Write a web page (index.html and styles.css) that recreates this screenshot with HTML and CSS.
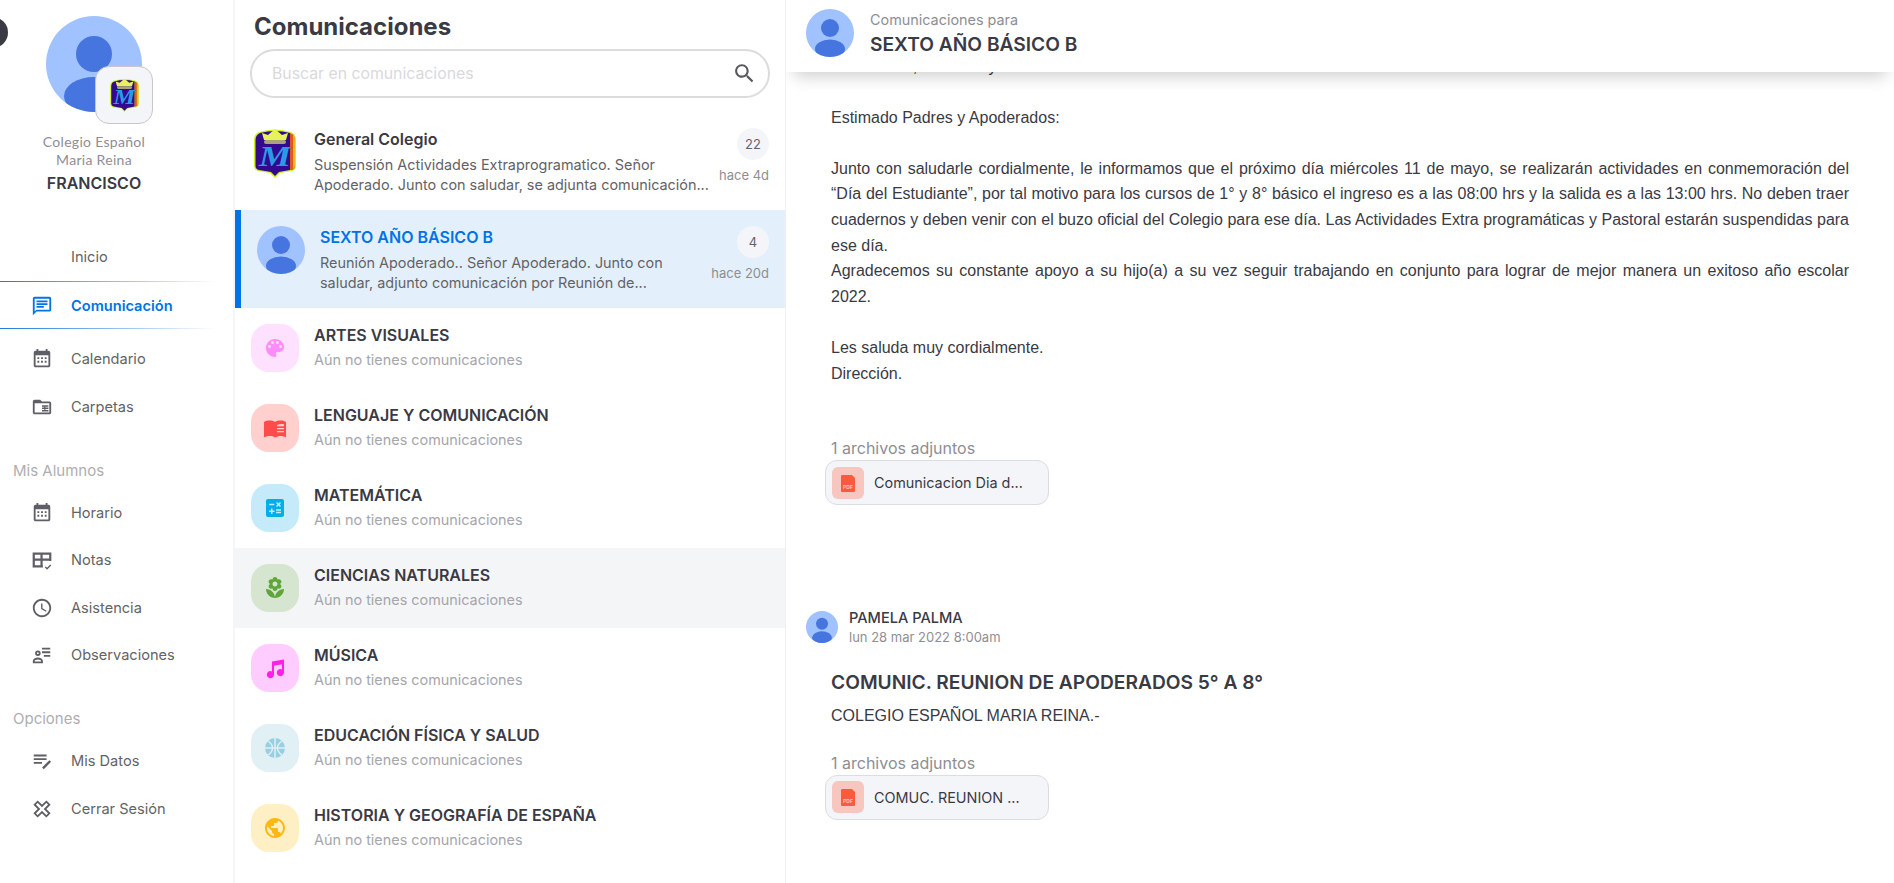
FILE: index.html
```html
<!DOCTYPE html>
<html lang="es">
<head>
<meta charset="utf-8">
<title>Comunicaciones</title>
<link rel="stylesheet" href="styles.css">
</head>
<body>
<svg class="defs" aria-hidden="true">
  <defs>
    <clipPath id="avatar-clip"><circle cx="48" cy="48" r="48"/></clipPath>
    <symbol id="avatar" viewBox="0 0 96 96">
      <circle cx="48" cy="48" r="48" fill="#a0c2ff"/>
      <g clip-path="url(#avatar-clip)" fill="#4675e0">
        <circle cx="48" cy="38" r="18"/>
        <ellipse cx="48" cy="80" rx="30" ry="19"/>
      </g>
    </symbol>
    <symbol id="shield" viewBox="0 0 42 50">
      <path d="M5 4 Q21 -1 37 4 Q42 6 42 12 L42 38 Q42 42 38 43 L26 45 L21 50 L16 45 L4 43 Q0 42 0 38 L0 12 Q0 6 5 4Z" fill="#c9f51f"/>
      <path d="M6 5 Q21 1 36 5 L36 42 L25 44 L21 48 L17 44 L5 42 Q1.500 41 1.500 38 L1.500 12 Q1.500 7 6 5Z" fill="#33098f"/>
      <path d="M36 5 Q41 7 41 12 L41 38 Q41 41 38 42 L36 42Z" fill="#dc5a1e"/>
      <path d="M39 7 Q41 9 41 12 L41 38 Q41 40 39 41Z" fill="#f0b41e"/>
      <path d="M10 12 L8 5 L14 7 L21 1 L28 7 L34 5 L32 12Z" fill="#e8f25a"/>
      <rect x="10" y="12" width="22" height="4" rx="2" fill="#a9a27a"/>
      <text x="21" y="38" text-anchor="middle" textLength="32" lengthAdjust="spacingAndGlyphs" class="shield-letter">M</text>
    </symbol>
    <symbol id="pdf" viewBox="0 0 32 32">
      <path d="M10 8 H20 L23 11 V24 Q23 25 22 25 H10 Q9 25 9 24 V9 Q9 8 10 8Z" fill="#fb5a3c"/>
      <text x="16" y="22" text-anchor="middle" class="pdf-text">PDF</text>
    </symbol>
    <symbol id="i-calendar" viewBox="0 0 24 24">
      <path d="M19 3h-1V1h-2v2H8V1H6v2H5c-1.11 0-1.99.9-1.99 2L3 19c0 1.1.89 2 2 2h14c1.1 0 2-.9 2-2V5c0-1.1-.9-2-2-2zm0 16H5V8h14v11z"/>
      <path d="M7 10h2v2H7zm4 0h2v2h-2zm4 0h2v2h-2zM7 14h2v2H7zm4 0h2v2h-2zm4 0h2v2h-2z"/>
    </symbol>
  </defs>
</svg>

<div class="app">
  <aside class="sidebar">
    <span class="corner-dot"></span>
    <div class="profile">
      <div class="profile-pic">
        <svg class="profile-avatar"><use href="#avatar"/></svg>
        <div class="school-badge"><svg class="school-shield"><use href="#shield"/></svg></div>
      </div>
      <p class="school-name">Colegio Español<br>Maria Reina</p>
      <p class="student-name">FRANCISCO</p>
    </div>
    <nav class="nav">
      <div class="nav-item"><span class="nav-icon"></span>Inicio</div>
      <div class="nav-item active">
        <svg class="nav-icon" viewBox="0 0 24 24"><path d="M20 2H4c-1.1 0-2 .9-2 2v18l4-4h14c1.1 0 2-.9 2-2V4c0-1.1-.9-2-2-2zm0 14H6l-2 2V4h16v12z"/><path d="M6 12h8v2H6zm0-3h12v2H6zm0-3h12v2H6z"/></svg>
        Comunicación
      </div>
      <div class="nav-group">
        <div class="nav-item"><svg class="nav-icon"><use href="#i-calendar"/></svg>Calendario</div>
        <div class="nav-item"><svg class="nav-icon" viewBox="0 0 24 24"><path d="M20 6h-8l-2-2H4c-1.1 0-2 .9-2 2v12c0 1.1.9 2 2 2h16c1.1 0 2-.9 2-2V8c0-1.1-.9-2-2-2zm0 12H4V8h16v10z"/><path d="M12 10h7v1.600h-7zm0 2.600h7v1.600h-7zm0 2.600h7v1.600h-7zM14.500 10h1.200v7h-1.200z"/></svg>Carpetas</div>
      </div>
      <div class="nav-label">Mis Alumnos</div>
      <div class="nav-item"><svg class="nav-icon"><use href="#i-calendar"/></svg>Horario</div>
      <div class="nav-item"><svg class="nav-icon stroked heavy" viewBox="0 0 24 24"><path d="M13 19H3V5h18v8M3 11.500h18M11.500 5v14"/><path class="thin" d="M15.500 19.500l2 2 4-4"/></svg>Notas</div>
      <div class="nav-item"><svg class="nav-icon" viewBox="0 0 24 24"><path d="M11.99 2C6.47 2 2 6.48 2 12s4.47 10 9.99 10C17.52 22 22 17.52 22 12S17.52 2 11.99 2zM12 20c-4.42 0-8-3.58-8-8s3.58-8 8-8 8 3.58 8 8-3.58 8-8 8zm.5-13H11v6l5.25 3.15.75-1.23-4.5-2.67z"/></svg>Asistencia</div>
      <div class="nav-item"><svg class="nav-icon stroked" viewBox="0 0 24 24"><circle cx="7.500" cy="10" r="2"/><path d="M3 20v-1.500c0-1.800 2.600-2.700 4.500-2.700s4.500.9 4.500 2.700V20z"/><path d="M12 5h9M12 9h9M14 13h7"/></svg>Observaciones</div>
      <div class="nav-label">Opciones</div>
      <div class="nav-item"><svg class="nav-icon stroked" viewBox="0 0 24 24"><path d="M3 6h14M3 10h14M3 14h9"/><path class="thick" d="M13 20l8-8"/></svg>Mis Datos</div>
      <div class="nav-item"><svg class="nav-icon stroked" viewBox="0 0 24 24"><path transform="rotate(45 12 12)" d="M9.700 3h4.600v6.700H21v4.600h-6.700V21H9.700v-6.700H3V9.700h6.700z"/></svg>Cerrar Sesión</div>
    </nav>
  </aside>

  <section class="channels">
    <h1 class="channels-title">Comunicaciones</h1>
    <div class="search">
      <span class="search-placeholder">Buscar en comunicaciones</span>
      <svg class="search-icon" viewBox="0 0 24 24"><path d="M15.5 14h-.79l-.28-.27C15.41 12.59 16 11.11 16 9.5 16 5.91 13.09 3 9.5 3S3 5.91 3 9.5 5.91 16 9.5 16c1.61 0 3.09-.59 4.23-1.57l.27.28v.79l5 4.99L20.49 19l-4.99-5zm-6 0C7.01 14 5 11.99 5 9.5S7.01 5 9.5 5 14 7.01 14 9.5 11.99 14 9.5 14z"/></svg>
    </div>
    <div class="channel-list">
      <div class="channel channel-tall">
        <svg class="channel-logo"><use href="#shield"/></svg>
        <div class="channel-text">
          <div class="channel-name">General Colegio</div>
          <div class="channel-desc">Suspensión Actividades Extraprogramatico. Señor Apoderado. Junto con saludar, se adjunta comunicación...</div>
        </div>
        <div class="channel-meta"><span class="count">22</span><span class="when">hace 4d</span></div>
      </div>
      <div class="channel channel-tall selected">
        <svg class="channel-avatar"><use href="#avatar"/></svg>
        <div class="channel-text">
          <div class="channel-name">SEXTO AÑO BÁSICO B</div>
          <div class="channel-desc">Reunión Apoderado.. Señor Apoderado. Junto con saludar, adjunto comunicación por Reunión de...</div>
        </div>
        <div class="channel-meta"><span class="count">4</span><span class="when">hace 20d</span></div>
      </div>

      <div class="channel">
        <span class="subject-icon tone-pink"><svg viewBox="0 0 24 24"><path d="M12 3c-4.97 0-9 4.03-9 9s4.03 9 9 9c.83 0 1.5-.67 1.5-1.5 0-.39-.15-.74-.39-1.01-.23-.26-.38-.61-.38-.99 0-.83.67-1.5 1.5-1.5H16c2.76 0 5-2.24 5-5 0-4.42-4.03-8-9-8zm-5.5 9c-.83 0-1.5-.67-1.5-1.5S5.67 9 6.5 9 8 9.67 8 10.5 7.33 12 6.5 12zm3-4C8.67 8 8 7.33 8 6.5S8.67 5 9.5 5s1.5.67 1.5 1.5S10.33 8 9.5 8zm5 0c-.83 0-1.5-.67-1.5-1.5S13.67 5 14.5 5s1.5.67 1.5 1.5S15.33 8 14.5 8zm3 4c-.83 0-1.5-.67-1.5-1.5S16.67 9 17.5 9s1.5.67 1.5 1.5-.67 1.5-1.5 1.5z"/></svg></span>
        <div class="channel-text"><div class="channel-name">ARTES VISUALES</div><div class="channel-empty">Aún no tienes comunicaciones</div></div>
      </div>
      <div class="channel">
        <span class="subject-icon tone-red"><svg viewBox="0 0 24 24"><path d="M1 6c1.45-1.1 3.55-1.5 5.5-1.5s4.05.4 5.5 1.5v15.5c-1.45-1.1-3.55-1.5-5.5-1.5-1.45 0-3.4.45-4.75 1.1-.1 0-.15.05-.25.05-.25 0-.5-.25-.5-.5z"/><path d="M12 6c1.45-1.1 3.55-1.5 5.5-1.5 1.17 0 2.39.15 3.5.5.75.25 1.4.55 2 1v14.65c0 .25-.25.5-.5.5-.1 0-.15 0-.25-.05-1.4-.75-3.1-1.05-4.75-1.05-1.7 0-4.15.65-5.5 1.5zm2 3v1.3h7V8.2c-2.4-.6-5-.3-7 .8zm0 3v1.3h7V12zm0 3v1.3h7V15z"/></svg></span>
        <div class="channel-text"><div class="channel-name">LENGUAJE Y COMUNICACIÓN</div><div class="channel-empty">Aún no tienes comunicaciones</div></div>
      </div>
      <div class="channel">
        <span class="subject-icon tone-sky"><svg viewBox="0 0 24 24"><path d="M19 3H5c-1.1 0-2 .9-2 2v14c0 1.1.9 2 2 2h14c1.1 0 2-.9 2-2V5c0-1.1-.9-2-2-2zm-5.97 4.06L14.09 6l1.41 1.41L16.91 6l1.06 1.06-1.41 1.41 1.41 1.41-1.06 1.06-1.41-1.4-1.41 1.41-1.06-1.06 1.41-1.41-1.41-1.42zm-6.78.66h5v1.5h-5v-1.5zM11.5 16h-2v2H8v-2H6v-1.5h2v-2h1.5v2h2V16zm6.5 1.25h-5v-1.5h5v1.5zm0-2.5h-5v-1.5h5v1.5z"/></svg></span>
        <div class="channel-text"><div class="channel-name">MATEMÁTICA</div><div class="channel-empty">Aún no tienes comunicaciones</div></div>
      </div>
      <div class="channel hovered">
        <span class="subject-icon tone-green"><svg viewBox="0 0 24 24"><path d="M12 22c4.97 0 9-4.03 9-9-4.97 0-9 4.03-9 9zM5.6 10.25c0 1.38 1.12 2.5 2.5 2.5.53 0 1.01-.16 1.42-.44l-.02.19c0 1.38 1.12 2.5 2.5 2.5s2.5-1.12 2.5-2.5l-.02-.19c.4.28.89.44 1.42.44 1.38 0 2.5-1.12 2.5-2.5 0-1-.59-1.85-1.43-2.25.84-.4 1.43-1.25 1.43-2.25 0-1.38-1.12-2.5-2.5-2.5-.53 0-1.01.16-1.42.44l.02-.19C14.5 2.12 13.38 1 12 1S9.5 2.12 9.5 3.5l.02.19c-.4-.28-.89-.44-1.42-.44-1.38 0-2.5 1.12-2.5 2.5 0 1 .59 1.85 1.43 2.25-.84.4-1.43 1.25-1.43 2.25zM12 5.5c1.38 0 2.5 1.12 2.5 2.5s-1.12 2.5-2.5 2.5S9.5 9.38 9.5 8s1.12-2.5 2.5-2.5zM3 13c0 4.97 4.03 9 9 9 0-4.97-4.03-9-9-9z"/></svg></span>
        <div class="channel-text"><div class="channel-name">CIENCIAS NATURALES</div><div class="channel-empty">Aún no tienes comunicaciones</div></div>
      </div>
      <div class="channel">
        <span class="subject-icon tone-magenta"><svg viewBox="0 0 24 24"><path d="M21 3.500 9 5.500V15.400a3.600 3.600 0 1 0 2 3.200V9.700l8-1.400v5.100a3.600 3.600 0 1 0 2 3.200z"/></svg></span>
        <div class="channel-text"><div class="channel-name">MÚSICA</div><div class="channel-empty">Aún no tienes comunicaciones</div></div>
      </div>
      <div class="channel">
        <span class="subject-icon tone-ice"><svg viewBox="0 0 24 24"><circle cx="12" cy="12" r="10"/><path class="ball-seams" d="M12 2v20M2 12h20M5 5c3 2 4.500 4.500 4.500 7S8 17 5 19M19 5c-3 2-4.500 4.500-4.500 7s1.500 5 4.500 7"/></svg></span>
        <div class="channel-text"><div class="channel-name">EDUCACIÓN FÍSICA Y SALUD</div><div class="channel-empty">Aún no tienes comunicaciones</div></div>
      </div>
      <div class="channel">
        <span class="subject-icon tone-amber"><svg viewBox="0 0 24 24"><path d="M12 2C6.48 2 2 6.48 2 12s4.48 10 10 10 10-4.48 10-10S17.52 2 12 2zm-1 17.93c-3.95-.49-7-3.85-7-7.93 0-.62.08-1.21.21-1.79L9 15v1c0 1.1.9 2 2 2v1.93zm6.9-2.54c-.26-.81-1-1.39-1.9-1.39h-1v-3c0-.55-.45-1-1-1H8v-2h2c.55 0 1-.45 1-1V7h2c1.1 0 2-.9 2-2v-.41c2.93 1.19 5 4.06 5 7.41 0 2.08-.8 3.97-2.1 5.39z"/></svg></span>
        <div class="channel-text"><div class="channel-name">HISTORIA Y GEOGRAFÍA DE ESPAÑA</div><div class="channel-empty">Aún no tienes comunicaciones</div></div>
      </div>
    </div>
  </section>

  <main class="feed">
    <header class="feed-header">
      <svg class="feed-avatar"><use href="#avatar"/></svg>
      <div class="feed-heading">
        <div class="feed-overline">Comunicaciones para</div>
        <div class="feed-title">SEXTO AÑO BÁSICO B</div>
      </div>
    </header>
    <div class="feed-scroll">
      <article class="message">
        <div class="message-body">
          <p class="prose">Talcahuano, 06 de mayo</p>
          <p class="prose prose-gap">Estimado Padres y Apoderados:</p>
          <p class="prose prose-gap">Junto con saludarle cordialmente, le informamos que el próximo día miércoles 11 de mayo, se realizarán actividades en conmemoración del “Día del Estudiante”, por tal motivo para los cursos de 1° y 8° básico el ingreso es a las 08:00 hrs y la salida es a las 13:00 hrs. No deben traer cuadernos y deben venir con el buzo oficial del Colegio para ese día. Las Actividades Extra programáticas y Pastoral estarán suspendidas para ese día.</p>
          <p class="prose">Agradecemos su constante apoyo a su hijo(a) a su vez seguir trabajando en conjunto para lograr de mejor manera un exitoso año escolar 2022.</p>
          <p class="prose prose-gap">Les saluda muy cordialmente.</p>
          <p class="prose">Dirección.</p>
          <div class="attach-label attach-label-first">1 archivos adjuntos</div>
          <div class="chip"><svg class="chip-icon"><use href="#pdf"/></svg><span class="chip-name">Comunicacion Dia d...</span></div>
        </div>
      </article>
      <article class="message message-second">
        <div class="sender">
          <svg class="sender-avatar"><use href="#avatar"/></svg>
          <div>
            <div class="sender-name">PAMELA PALMA</div>
            <div class="sender-date">lun 28 mar 2022 8:00am</div>
          </div>
        </div>
        <div class="message-body">
          <h2 class="message-title">COMUNIC. REUNION DE APODERADOS 5° A 8°</h2>
          <p class="prose prose-tight">COLEGIO ESPAÑOL MARIA REINA.-</p>
          <div class="attach-label">1 archivos adjuntos</div>
          <div class="chip"><svg class="chip-icon"><use href="#pdf"/></svg><span class="chip-name">COMUC. REUNION ...</span></div>
        </div>
      </article>
    </div>
  </main>
</div>
</body>
</html>
```

FILE: styles.css
```css
* { box-sizing: border-box; }

html, body {
  margin: 0;
  height: 100%;
  overflow: hidden;
  background: #fff;
}

body {
  font-family: "Inter", "Liberation Sans", sans-serif;
  color: #3a3a44;
}

p, h1, h2 { margin: 0; }

.defs { width: 0; height: 0; display: block; }

.shield-letter {
  font-family: "Liberation Serif", serif;
  font-style: italic;
  font-weight: 700;
  font-size: 30px;
  fill: #2a9ae8;
}

.pdf-text {
  font-family: "Inter", sans-serif;
  font-weight: 700;
  font-size: 5px;
  fill: #ffc9bd;
}

.app {
  display: flex;
  height: 883px;
}

/* Sidebar */
.sidebar {
  position: relative;
  flex: none;
  width: 235px;
  border-right: 2px solid #f4f5f9;
  overflow: hidden;
}

.corner-dot {
  position: absolute;
  left: -23px;
  top: 17px;
  width: 31px;
  height: 31px;
  border-radius: 50%;
  background: #3a3a44;
}

.profile {
  width: 188px;
  padding-top: 16px;
  height: 233px;
  text-align: center;
}

.profile-pic {
  position: relative;
  width: 96px;
  height: 96px;
  margin: 0 auto;
}

.profile-avatar { width: 96px; height: 96px; display: block; }

.school-badge {
  position: absolute;
  left: 49px;
  top: 50px;
  width: 58px;
  height: 58px;
  border: 1.5px solid #c6c6cc;
  border-radius: 14px;
  background: #f4f5f9;
  display: flex;
  align-items: center;
  justify-content: center;
}

.school-shield { width: 29px; height: 34px; }

.school-name {
  margin-top: 21px;
  font-family: "Lato", "Open Sans", sans-serif;
  font-size: 14px;
  line-height: 18px;
  color: #8e8e93;
  letter-spacing: .3px;
}

.student-name {
  margin-top: 3px;
  font-size: 16px;
  font-weight: 600;
  line-height: 22px;
  color: #3a3a44;
}

.nav { display: block; }

.nav-item {
  display: flex;
  align-items: center;
  height: 47.6px;
  padding-left: 31px;
  font-size: 14.6px;
  color: #636366;
}

.nav-icon {
  flex: none;
  width: 22px;
  height: 22px;
  margin-right: 18px;
  fill: #5e5e66;
}

.nav-icon.stroked {
  fill: none;
  stroke: #5e5e66;
  stroke-width: 2;
}

.nav-icon.heavy { stroke-width: 2.4; }
.nav-icon .thin { stroke-width: 1.5; }
.nav-icon .thick { stroke-width: 2.6; }

.nav-item.active {
  height: 48.6px;
  padding-top: 1.5px;
  font-weight: 600;
  color: #0073e6;
  border-top: 1.5px solid;
  border-bottom: 1.5px solid;
  border-image: linear-gradient(90deg, #1d78d8 0%, #9cc6f2 55%, rgba(255,255,255,0) 92%) 1;
}

.nav-item.active .nav-icon { fill: #0073e6; }

.nav-group { margin-top: 6.5px; }

.nav-label {
  height: 20px;
  line-height: 20px;
  margin: 30px 0 8px 13px;
  font-size: 15px;
  color: #aeaeb2;
}

/* Channels column */
.channels {
  flex: none;
  width: 551px;
  border-right: 1px solid #f0f0f4;
  overflow: hidden;
}

.channels-title {
  margin: 12px 0 0 19px;
  font-size: 24px;
  font-weight: 700;
  line-height: 30px;
  color: #3a3a44;
}

.search {
  display: flex;
  align-items: center;
  justify-content: space-between;
  width: 520px;
  height: 48.5px;
  margin: 7px 0 14.5px 15px;
  padding: 0 11px 0 20px;
  border: 2px solid #dcdcdc;
  border-radius: 25px;
}

.search-placeholder {
  font-size: 15.8px;
  color: #d9d9dd;
}

.search-icon {
  width: 25px;
  height: 25px;
  fill: #58585e;
}

.channel {
  display: flex;
  height: 80px;
  padding: 16px;
}

.channel-tall { height: 98px; }

.channel.selected {
  background: #e3f0fc;
  border-left: 6px solid #0073e6;
}

.channel.hovered { background: #f4f5f7; }

.channel-logo {
  flex: none;
  width: 42px;
  height: 50px;
  margin: 0 18px 0 3px;
}

.channel-avatar {
  flex: none;
  width: 48px;
  height: 48px;
  margin-right: 15px;
}

.channel-text {
  flex: 1;
  min-width: 0;
}

.channel-name {
  font-size: 16px;
  font-weight: 600;
  line-height: 22px;
  color: #3a3a44;
  white-space: nowrap;
}

.selected .channel-name { color: #0073e6; }

.channel-desc {
  margin-top: 5px;
  font-size: 14.4px;
  line-height: 20px;
  color: #636366;
}

.channel-empty {
  margin-top: 4px;
  font-size: 14.4px;
  line-height: 20px;
  color: #a6a6ab;
}

.channel-meta {
  flex: none;
  display: flex;
  flex-direction: column;
  align-items: flex-end;
  margin-left: 6px;
}

.count {
  width: 32px;
  height: 32px;
  border-radius: 50%;
  background: #f4f5f9;
  font-size: 13px;
  line-height: 32px;
  text-align: center;
  color: #636366;
}

.when {
  margin-top: 6px;
  font-size: 13px;
  line-height: 18px;
  color: #8e8e93;
}

.subject-icon {
  flex: none;
  display: flex;
  align-items: center;
  justify-content: center;
  width: 48px;
  height: 48px;
  margin-right: 15px;
  border-radius: 18px;
}

.subject-icon svg { width: 24px; height: 24px; }

.ball-seams {
  fill: none;
  stroke: #e0f0f5;
  stroke-width: 1.5;
}

.tone-pink { background: #fee0ff; fill: #ff8cf8; }
.tone-red { background: #ffd0ce; fill: #ff4b4b; }
.tone-sky { background: #c5ebfb; fill: #00aee8; }
.tone-green { background: #d6e5cf; fill: #5ea63c; }
.tone-magenta { background: #ffccff; fill: #ff1fe8; }
.tone-ice { background: #e0f0f5; fill: #97d0e2; }
.tone-amber { background: #ffefc4; fill: #ffb713; }

/* Feed */
.feed {
  flex: 1;
  min-width: 0;
  display: flex;
  flex-direction: column;
  overflow: hidden;
}

.feed-header {
  flex: none;
  z-index: 2;
  display: flex;
  align-items: center;
  height: 72px;
  padding: 0 0 6px 20px;
  background: #fff;
  box-shadow: 0 12px 16px -8px rgba(0, 0, 0, .2);
}

.feed-avatar {
  flex: none;
  width: 48px;
  height: 48px;
  margin-right: 16px;
}

.feed-heading { padding-top: 1px; }

.feed-overline {
  font-size: 14.4px;
  line-height: 20px;
  color: #8e8e93;
}

.feed-title {
  margin-top: 1px;
  font-size: 19.2px;
  font-weight: 600;
  line-height: 26px;
  color: #3a3a44;
}

.feed-scroll {
  flex: 1;
  min-height: 0;
  overflow: hidden;
  padding: 0 45px 0 20px;
}

.message:first-child { margin-top: -18.5px; }

.message-second { margin-top: 104px; }

.message-body { padding-left: 25px; }

.prose {
  font-family: "Liberation Sans", Arial, sans-serif;
  font-size: 16px;
  line-height: 25.6px;
  text-align: justify;
  color: #3a3a44;
}

.prose-gap { margin-top: 25.6px; }
.prose-tight { margin-top: 7px; }

.attach-label {
  margin-top: 22px;
  height: 24px;
  font-size: 16px;
  line-height: 24px;
  color: #8e8e93;
}

.attach-label-first { margin-top: 50px; }

.chip {
  display: flex;
  align-items: center;
  width: 224px;
  height: 45px;
  margin-left: -6px;
  padding: 0 6px;
  border: 1px solid #dcdce3;
  border-radius: 12px;
  background: #f4f5f9;
}

.chip-icon {
  flex: none;
  width: 32px;
  height: 32px;
  border-radius: 6px;
  background: #f7c6bf;
}

.chip-name {
  margin-left: 10px;
  font-size: 14.4px;
  color: #3a3a44;
  white-space: nowrap;
}

.sender {
  display: flex;
  align-items: center;
  gap: 11px;
}

.sender-avatar {
  flex: none;
  width: 32px;
  height: 32px;
}

.sender-name {
  font-size: 14.6px;
  font-weight: 500;
  line-height: 18px;
  color: #3a3a44;
}

.sender-date {
  margin-top: 2px;
  font-size: 13px;
  line-height: 16px;
  color: #8e8e93;
}

.message-title {
  margin-top: 23px;
  font-size: 19.2px;
  font-weight: 600;
  line-height: 28px;
  color: #3a3a44;
}
```
